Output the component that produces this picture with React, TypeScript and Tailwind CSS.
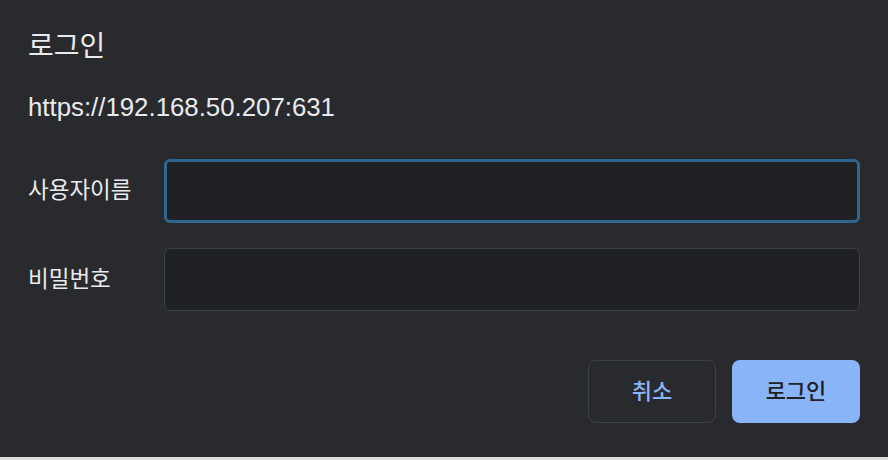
import React from 'react';

const sans = { fontFamily: '"Liberation Sans", "Noto Sans CJK KR", sans-serif' };

export default function App() {
  return (
    <div className="w-[888px] h-[460px] flex flex-col bg-[#dcdcdc]" style={sans}>
      <div className="h-[457px] bg-[#292a2d] text-[#e8eaed] px-[28px] flex flex-col">
        <h1 className="mt-[30px] text-[28px] leading-[34px] font-normal">로그인</h1>
        <div className="mt-[28px] text-[25.8px] leading-[30px]">https://192.168.50.207:631</div>

        <div className="mt-[37px] grid grid-cols-[136px_1fr] gap-y-[25px] items-center">
          <label className="text-[22.5px] leading-[28px]">사용자이름</label>
          <input
            autoFocus
            className="h-[64px] w-full rounded-[6px] bg-[#202124] border-[3px] border-[#2f6690] outline-none px-3 text-[22px] text-[#e8eaed]"
          />
          <label className="text-[22.5px] leading-[28px]">비밀번호</label>
          <input
            type="password"
            className="h-[63px] w-full rounded-[6px] bg-[#202124] border border-[#3c4043] outline-none px-3 text-[22px] text-[#e8eaed]"
          />
        </div>

        <div className="mt-[49px] flex justify-end gap-[16px]">
          <button className="w-[128px] h-[63px] rounded-[8px] border border-[#3c4043] text-[#8ab4f8] text-[22px] font-medium">
            취소
          </button>
          <button className="w-[128px] h-[63px] rounded-[8px] bg-[#8ab4f8] text-[#202124] text-[22px] font-medium">
            로그인
          </button>
        </div>
      </div>
    </div>
  );
}
